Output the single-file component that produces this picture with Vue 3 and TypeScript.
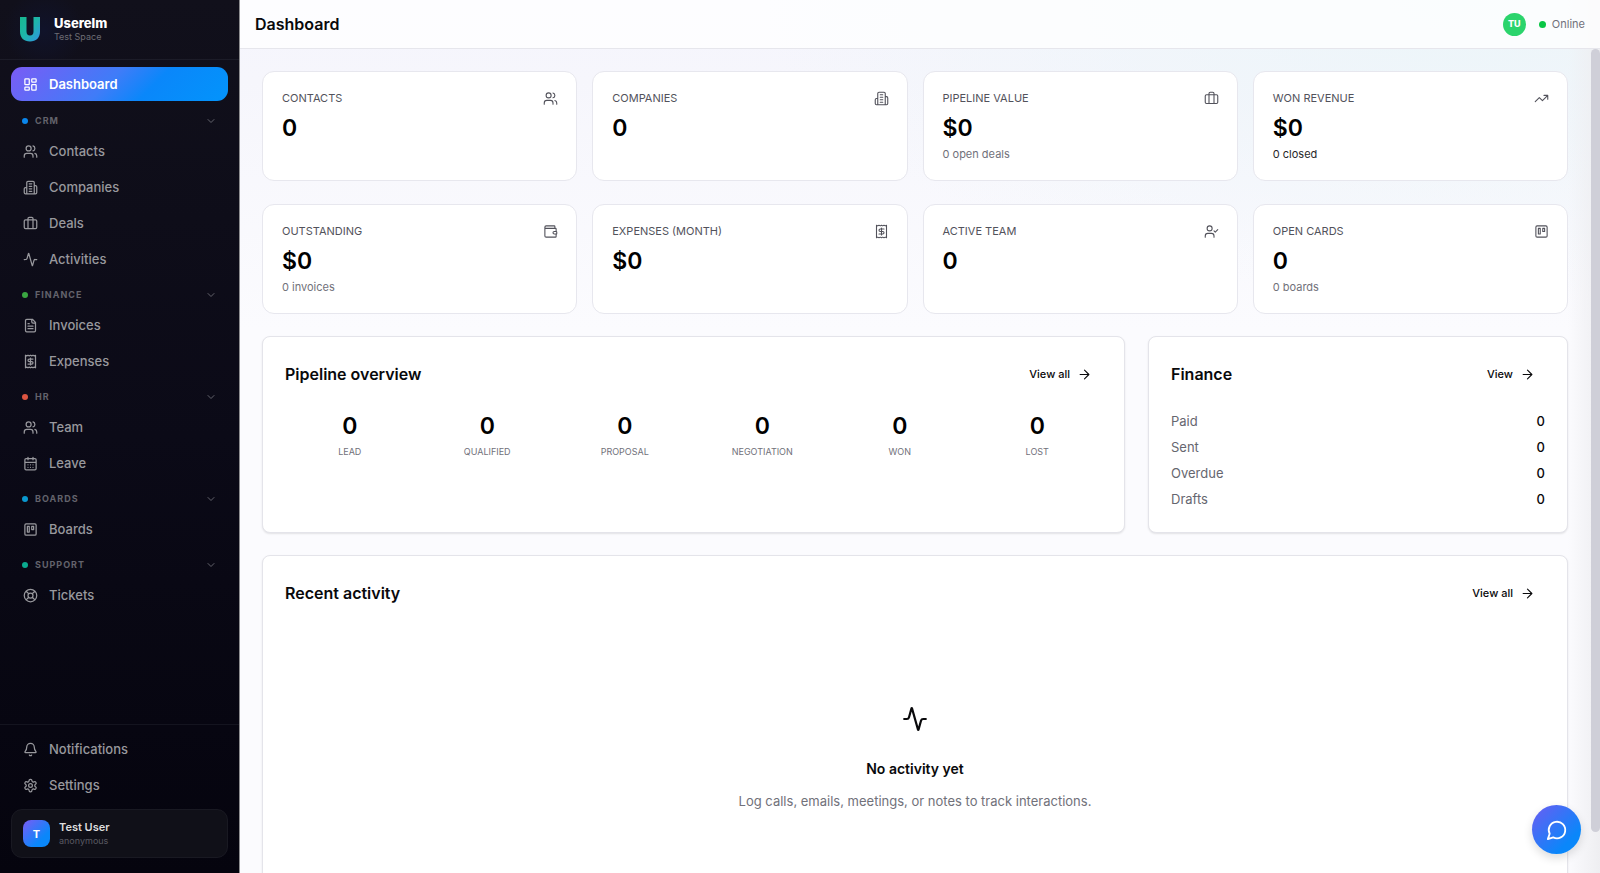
<script setup lang="ts">
import { ref } from 'vue'

type IconName =
  | 'dashboard' | 'users' | 'building' | 'briefcase' | 'activity' | 'file' | 'receipt'
  | 'calendar' | 'board' | 'lifebuoy' | 'bell' | 'settings' | 'wallet' | 'userCheck'
  | 'trending' | 'chevron' | 'arrow' | 'chat'

interface NavItem { label: string; icon: IconName }
interface NavSection { title: string; tone: string; items: NavItem[] }
interface Stat { label: string; value: string; icon: IconName; note?: string; strong?: boolean }

const icons: Record<IconName, string> = {
  dashboard: 'M4 3h5a1 1 0 0 1 1 1v7a1 1 0 0 1-1 1H4a1 1 0 0 1-1-1V4a1 1 0 0 1 1-1ZM15 3h5a1 1 0 0 1 1 1v3a1 1 0 0 1-1 1h-5a1 1 0 0 1-1-1V4a1 1 0 0 1 1-1ZM15 12h5a1 1 0 0 1 1 1v7a1 1 0 0 1-1 1h-5a1 1 0 0 1-1-1v-7a1 1 0 0 1 1-1ZM4 16h5a1 1 0 0 1 1 1v3a1 1 0 0 1-1 1H4a1 1 0 0 1-1-1v-3a1 1 0 0 1 1-1Z',
  users: 'M16 21v-2a4 4 0 0 0-4-4H6a4 4 0 0 0-4 4v2M16 3.128a4 4 0 0 1 0 7.744M22 21v-2a4 4 0 0 0-3-3.87M13 7a4 4 0 1 1-8 0a4 4 0 1 1 8 0Z',
  building: 'M6 22V4a2 2 0 0 1 2-2h8a2 2 0 0 1 2 2v18ZM6 12H4a2 2 0 0 0-2 2v6a2 2 0 0 0 2 2h2M18 9h2a2 2 0 0 1 2 2v9a2 2 0 0 1-2 2h-2M10 6h4M10 10h4M10 14h4M10 18h4',
  briefcase: 'M16 20V4a2 2 0 0 0-2-2h-4a2 2 0 0 0-2 2v16M4 6h16a2 2 0 0 1 2 2v10a2 2 0 0 1-2 2H4a2 2 0 0 1-2-2V8a2 2 0 0 1 2-2Z',
  activity: 'M22 12h-2.48a2 2 0 0 0-1.93 1.46l-2.35 8.36a.25.25 0 0 1-.48 0L9.24 2.18a.25.25 0 0 0-.48 0l-2.35 8.36A2 2 0 0 1 4.49 12H2',
  file: 'M15 2H6a2 2 0 0 0-2 2v16a2 2 0 0 0 2 2h12a2 2 0 0 0 2-2V7ZM14 2v4a2 2 0 0 0 2 2h4M10 9H8M16 13H8M16 17H8',
  receipt: 'M4 2v20l2-1 2 1 2-1 2 1 2-1 2 1 2-1 2 1V2l-2 1-2-1-2 1-2-1-2 1-2-1-2 1ZM16 8h-6a2 2 0 1 0 0 4h4a2 2 0 1 1 0 4H8M12 17.5v-11',
  calendar: 'M8 2v4M16 2v4M5 4h14a2 2 0 0 1 2 2v14a2 2 0 0 1-2 2H5a2 2 0 0 1-2-2V6a2 2 0 0 1 2-2ZM3 10h18M8 14h.01M12 14h.01M16 14h.01M8 18h.01M12 18h.01M16 18h.01',
  board: 'M5 3h14a2 2 0 0 1 2 2v14a2 2 0 0 1-2 2H5a2 2 0 0 1-2-2V5a2 2 0 0 1 2-2ZM7 7h3v9H7ZM14 7h3v5h-3Z',
  lifebuoy: 'M22 12a10 10 0 1 1-20 0a10 10 0 1 1 20 0ZM16 12a4 4 0 1 1-8 0a4 4 0 1 1 8 0ZM4.93 4.93l4.24 4.24M14.83 9.17l4.24-4.24M14.83 14.83l4.24 4.24M9.17 14.83l-4.24 4.24',
  bell: 'M10.268 21a2 2 0 0 0 3.464 0M3.262 15.326A1 1 0 0 0 4 17h16a1 1 0 0 0 .74-1.673C19.41 13.956 18 12.499 18 8A6 6 0 0 0 6 8c0 4.499-1.411 5.956-2.738 7.326',
  settings: 'M12.22 2h-.44a2 2 0 0 0-2 2v.18a2 2 0 0 1-1 1.73l-.43.25a2 2 0 0 1-2 0l-.15-.08a2 2 0 0 0-2.73.73l-.22.38a2 2 0 0 0 .73 2.73l.15.1a2 2 0 0 1 1 1.72v.51a2 2 0 0 1-1 1.74l-.15.09a2 2 0 0 0-.73 2.73l.22.38a2 2 0 0 0 2.73.73l.15-.08a2 2 0 0 1 2 0l.43.25a2 2 0 0 1 1 1.73V20a2 2 0 0 0 2 2h.44a2 2 0 0 0 2-2v-.18a2 2 0 0 1 1-1.73l.43-.25a2 2 0 0 1 2 0l.15.08a2 2 0 0 0 2.73-.73l.22-.39a2 2 0 0 0-.73-2.73l-.15-.08a2 2 0 0 1-1-1.74v-.5a2 2 0 0 1 1-1.74l.15-.09a2 2 0 0 0 .73-2.73l-.22-.38a2 2 0 0 0-2.73-.73l-.15.08a2 2 0 0 1-2 0l-.43-.25a2 2 0 0 1-1-1.73V4a2 2 0 0 0-2-2ZM15 12a3 3 0 1 1-6 0a3 3 0 1 1 6 0Z',
  wallet: 'M19 7V4a1 1 0 0 0-1-1H5a2 2 0 0 0 0 4h15a1 1 0 0 1 1 1v4h-3a2 2 0 0 0 0 4h3a1 1 0 0 0 1-1v-2a1 1 0 0 0-1-1M3 5v14a2 2 0 0 0 2 2h15a1 1 0 0 0 1-1v-4',
  userCheck: 'M16 11l2 2 4-4M16 21v-2a4 4 0 0 0-4-4H6a4 4 0 0 0-4 4v2M13 7a4 4 0 1 1-8 0a4 4 0 1 1 8 0Z',
  trending: 'M16 7h6v6M22 7l-8.5 8.5-5-5L2 17',
  chevron: 'M6 9l6 6 6-6',
  arrow: 'M5 12h14M12 5l7 7-7 7',
  chat: 'M7.9 20A9 9 0 1 0 4 16.1L2 22Z',
}

const sections: NavSection[] = [
  {
    title: 'CRM', tone: 'blue',
    items: [
      { label: 'Contacts', icon: 'users' },
      { label: 'Companies', icon: 'building' },
      { label: 'Deals', icon: 'briefcase' },
      { label: 'Activities', icon: 'activity' },
    ],
  },
  {
    title: 'FINANCE', tone: 'green',
    items: [
      { label: 'Invoices', icon: 'file' },
      { label: 'Expenses', icon: 'receipt' },
    ],
  },
  {
    title: 'HR', tone: 'red',
    items: [
      { label: 'Team', icon: 'users' },
      { label: 'Leave', icon: 'calendar' },
    ],
  },
  { title: 'BOARDS', tone: 'cyan', items: [{ label: 'Boards', icon: 'board' }] },
  { title: 'SUPPORT', tone: 'teal', items: [{ label: 'Tickets', icon: 'lifebuoy' }] },
]

const footerItems: NavItem[] = [
  { label: 'Notifications', icon: 'bell' },
  { label: 'Settings', icon: 'settings' },
]

const stats: Stat[] = [
  { label: 'CONTACTS', value: '0', icon: 'users' },
  { label: 'COMPANIES', value: '0', icon: 'building' },
  { label: 'PIPELINE VALUE', value: '$0', icon: 'briefcase', note: '0 open deals' },
  { label: 'WON REVENUE', value: '$0', icon: 'trending', note: '0 closed', strong: true },
  { label: 'OUTSTANDING', value: '$0', icon: 'wallet', note: '0 invoices' },
  { label: 'EXPENSES (MONTH)', value: '$0', icon: 'receipt' },
  { label: 'ACTIVE TEAM', value: '0', icon: 'userCheck' },
  { label: 'OPEN CARDS', value: '0', icon: 'board', note: '0 boards' },
]

const stages = ['LEAD', 'QUALIFIED', 'PROPOSAL', 'NEGOTIATION', 'WON', 'LOST']
const finance = ['Paid', 'Sent', 'Overdue', 'Drafts']

const collapsed = ref<Record<string, boolean>>({})
function toggle(title: string): void {
  collapsed.value[title] = !collapsed.value[title]
}
</script>

<template>
  <div class="app">
    <aside class="sidebar">
      <div class="brand">
        <svg class="logo" viewBox="0 0 20 25" aria-hidden="true">
          <defs>
            <linearGradient id="logo-fill" x1="0" y1="0" x2="1" y2="1">
              <stop offset="0" stop-color="#17b890" />
              <stop offset="0.5" stop-color="#1eb5ab" />
              <stop offset="1" stop-color="#3192e6" />
            </linearGradient>
          </defs>
          <path fill="url(#logo-fill)" d="M0 0H6.500V14.500Q6.500 18.500 10 18.500T13.500 14.500V0H20V14.500C20 21 16 24.500 10 24.500S0 21 0 14.500Z" />
        </svg>
        <div class="brand-text">
          <strong>Userelm</strong>
          <span>Test Space</span>
        </div>
      </div>

      <nav class="nav" aria-label="Main">
        <a class="item active" href="#dashboard" aria-current="page">
          <svg class="icon" viewBox="0 0 24 24" aria-hidden="true"><path :d="icons.dashboard" /></svg>
          Dashboard
        </a>
        <section v-for="s in sections" :key="s.title" class="group">
          <button
            class="group-head"
            type="button"
            :aria-expanded="!collapsed[s.title]"
            @click="toggle(s.title)"
          >
            <span class="dot" :class="s.tone"></span>
            <span class="group-title">{{ s.title }}</span>
            <svg class="icon chevron" viewBox="0 0 24 24" aria-hidden="true"><path :d="icons.chevron" /></svg>
          </button>
          <div v-if="!collapsed[s.title]" class="group-items">
            <a v-for="i in s.items" :key="i.label" class="item" :href="'#' + i.label.toLowerCase()">
              <svg class="icon" viewBox="0 0 24 24" aria-hidden="true"><path :d="icons[i.icon]" /></svg>
              {{ i.label }}
            </a>
          </div>
        </section>
      </nav>

      <div class="side-foot">
        <a v-for="i in footerItems" :key="i.label" class="item" :href="'#' + i.label.toLowerCase()">
          <svg class="icon" viewBox="0 0 24 24" aria-hidden="true"><path :d="icons[i.icon]" /></svg>
          {{ i.label }}
        </a>
        <button class="profile" type="button">
          <span class="profile-badge">T</span>
          <span class="profile-text">
            <span class="profile-name">Test User</span>
            <span class="profile-role">anonymous</span>
          </span>
        </button>
      </div>
    </aside>

    <div class="main">
      <header class="topbar">
        <h1>Dashboard</h1>
        <div class="presence">
          <span class="avatar">TU</span>
          <span class="status"><span class="status-dot"></span>Online</span>
        </div>
      </header>

      <main class="content">
        <section class="stats" aria-label="Key figures">
          <article v-for="s in stats" :key="s.label" class="stat">
            <div class="stat-head">
              <span>{{ s.label }}</span>
              <svg class="icon" viewBox="0 0 24 24" aria-hidden="true"><path :d="icons[s.icon]" /></svg>
            </div>
            <div class="figure">{{ s.value }}</div>
            <div v-if="s.note" class="note" :class="{ strong: s.strong }">{{ s.note }}</div>
          </article>
        </section>

        <div class="panels">
          <section class="panel wide">
            <div class="panel-head">
              <h2>Pipeline overview</h2>
              <a class="more" href="#deals">View all
                <svg class="icon" viewBox="0 0 24 24" aria-hidden="true"><path :d="icons.arrow" /></svg>
              </a>
            </div>
            <div class="stages">
              <div v-for="s in stages" :key="s" class="stage">
                <div class="figure">0</div>
                <div class="stage-name">{{ s }}</div>
              </div>
            </div>
          </section>

          <section class="panel">
            <div class="panel-head">
              <h2>Finance</h2>
              <a class="more" href="#invoices">View
                <svg class="icon" viewBox="0 0 24 24" aria-hidden="true"><path :d="icons.arrow" /></svg>
              </a>
            </div>
            <dl class="ledger">
              <div v-for="f in finance" :key="f">
                <dt>{{ f }}</dt>
                <dd>0</dd>
              </div>
            </dl>
          </section>
        </div>

        <section class="panel">
          <div class="panel-head">
            <h2>Recent activity</h2>
            <a class="more" href="#activities">View all
              <svg class="icon" viewBox="0 0 24 24" aria-hidden="true"><path :d="icons.arrow" /></svg>
            </a>
          </div>
          <div class="empty">
            <svg class="icon" viewBox="0 0 24 24" aria-hidden="true"><path :d="icons.activity" /></svg>
            <h3>No activity yet</h3>
            <p>Log calls, emails, meetings, or notes to track interactions.</p>
          </div>
        </section>
      </main>

      <div class="scroll-thumb" aria-hidden="true"></div>
    </div>

    <button class="fab" type="button" aria-label="Open chat">
      <svg class="icon" viewBox="0 0 24 24" aria-hidden="true"><path :d="icons.chat" /></svg>
    </button>
  </div>
</template>

<style>
body {
  margin: 0;
  overflow: hidden;
}
</style>

<style scoped>
.app {
  display: flex;
  height: 100vh;
  font-family: Inter, 'Liberation Sans', sans-serif;
  font-size: 13px;
  line-height: 20px;
  color: #09090b;
}
.app * {
  box-sizing: border-box;
}
button {
  font: inherit;
  border: 0;
  margin: 0;
  cursor: pointer;
}
a {
  color: inherit;
  text-decoration: none;
}
h1, h2, h3, p, dl, dd {
  margin: 0;
}
.icon {
  width: 15px;
  height: 15px;
  flex: none;
  fill: none;
  stroke: currentColor;
  stroke-width: 2;
  stroke-linecap: round;
  stroke-linejoin: round;
}

/* Sidebar */
.sidebar {
  flex: none;
  display: flex;
  flex-direction: column;
  width: 240px;
  border-right: 1px solid #8d8d90;
  background: linear-gradient(180deg, #11101b 0%, #0b0a17 50%, #05040e 100%);
  color: #98989d;
}
.brand {
  display: flex;
  align-items: center;
  gap: 14px;
  height: 60px;
  padding: 0 20px;
  border-bottom: 1px solid #1c1c28;
  background: radial-gradient(circle at 44px 30px, #10132a 0, transparent 40px);
}
.logo {
  width: 20px;
  height: 25px;
}
.brand-text {
  display: flex;
  flex-direction: column;
  font-size: 9px;
  line-height: 14px;
  color: #6c6c74;
}
.brand-text strong {
  font-size: 13px;
  font-weight: 800;
  color: #ffffff;
}
.nav {
  flex: 1;
  min-height: 0;
  padding: 7px 11px;
  overflow: hidden;
}
.item {
  display: flex;
  align-items: center;
  gap: 11px;
  height: 34px;
  padding: 0 12px;
  border-radius: 11px;
  font-weight: 500;
}
.item.active {
  background: linear-gradient(135deg, #7a5cf5 0%, #3f7cf8 45%, #0a87fa 64%, #0394fb 100%);
  color: #ffffff;
  font-weight: 600;
}
.group {
  margin-top: 6px;
}
.group-head {
  display: flex;
  align-items: center;
  gap: 7px;
  width: 100%;
  height: 27px;
  padding: 0 11px;
  background: none;
  color: #63636c;
  font-size: 9px;
  font-weight: 700;
  letter-spacing: 1px;
}
.group + .group {
  margin-top: 5px;
}
.group-title {
  flex: 1;
  text-align: left;
}
.chevron {
  width: 12px;
  height: 12px;
}
.dot {
  width: 6px;
  height: 6px;
  border-radius: 50%;
}
.blue { background: #0a86ec; }
.green { background: #3aa641; }
.red { background: #dc5441; }
.cyan { background: #0a98cf; }
.teal { background: #0aab8f; }
.group-items {
  display: grid;
  gap: 2px;
}
.side-foot {
  display: grid;
  gap: 2px;
  padding: 7px 11px 15px;
  border-top: 1px solid #14141f;
}
.profile {
  display: flex;
  align-items: center;
  gap: 9px;
  height: 49px;
  margin-top: 5px;
  padding: 0 11px;
  border: 1px solid #191922;
  border-radius: 11px;
  background: #101018;
  text-align: left;
}
.profile-badge {
  display: grid;
  place-items: center;
  width: 27px;
  height: 27px;
  border-radius: 8px;
  background: linear-gradient(135deg, #7a5cf5 0%, #0a87fa 70%);
  color: #ffffff;
  font-size: 11px;
  font-weight: 700;
}
.profile-text {
  display: flex;
  flex-direction: column;
  line-height: 14px;
}
.profile-name {
  font-size: 11px;
  font-weight: 600;
  color: #dededf;
}
.profile-role {
  font-size: 9px;
  color: #5a5a62;
}

/* Main column */
.main {
  position: relative;
  flex: 1;
  min-width: 0;
  display: flex;
  flex-direction: column;
  background:
    linear-gradient(270deg, #eeeef1 0, transparent 32px),
    radial-gradient(ellipse 700px 300px at 90% 0, #ecf5f9 0, transparent 100%),
    linear-gradient(180deg, #f5f5fd 0, #f6f6fc 80px, #fbfbfe 330px);
}
.topbar {
  flex: none;
  display: flex;
  align-items: center;
  justify-content: space-between;
  height: 49px;
  padding: 0 15px;
  border-bottom: 1px solid #e6e6ec;
  background: rgba(255, 255, 255, 0.75);
}
h1 {
  font-size: 16px;
  font-weight: 600;
}
.presence {
  display: flex;
  align-items: center;
  gap: 13px;
}
.avatar {
  display: grid;
  place-items: center;
  width: 23px;
  height: 23px;
  border-radius: 50%;
  background: #2bd46c;
  color: #ffffff;
  font-size: 9px;
  font-weight: 800;
}
.status {
  display: flex;
  align-items: center;
  gap: 6px;
  font-size: 11px;
  color: #71717a;
}
.status-dot {
  width: 7px;
  height: 7px;
  border-radius: 50%;
  background: #09c645;
}
.content {
  flex: 1;
  min-height: 0;
  display: flex;
  flex-direction: column;
  gap: 22px;
  padding: 22px 32px 22px 22px;
  overflow-y: auto;
  scrollbar-width: none;
}
.content > * {
  flex: none;
}
.scroll-thumb {
  position: absolute;
  top: 49px;
  right: 0;
  bottom: 41px;
  width: 9px;
  border-radius: 5px;
  background: #cfcfd8;
}
.stats {
  display: grid;
  grid-template-columns: repeat(4, 1fr);
  gap: 23px 15px;
}
.stat {
  padding: 18px 18px 18px 19px;
  border: 1px solid #e7e7ee;
  border-radius: 12px;
  background: #ffffff;
}
.stat-head {
  display: flex;
  align-items: center;
  justify-content: space-between;
  font-size: 11px;
  line-height: 16px;
  color: #52525b;
}
.stat-head .icon {
  stroke-width: 1.75;
}
.figure {
  font-size: 23px;
  line-height: 30px;
  font-weight: 600;
  color: #000000;
}
.stat .figure {
  margin-top: 7px;
}
.note {
  margin-top: 3px;
  font-size: 11px;
  line-height: 16px;
  color: #71717a;
}
.note.strong {
  color: #27272a;
}
.panels {
  display: grid;
  grid-template-columns: repeat(3, 1fr);
  gap: 23px;
}
.panel {
  padding: 22px 22px 23px;
  border: 1px solid #e4e4ea;
  border-radius: 8px;
  background: #ffffff;
  box-shadow: 0 1px 2px rgba(0, 0, 0, 0.1);
}
.wide {
  grid-column: span 2;
}
.panel-head {
  display: flex;
  align-items: center;
  justify-content: space-between;
  height: 30px;
  margin-bottom: 22px;
}
h2 {
  font-size: 16px;
  font-weight: 600;
}
.more {
  display: flex;
  align-items: center;
  gap: 7px;
  height: 30px;
  padding: 0 10px;
  border-radius: 6px;
  font-size: 11px;
  font-weight: 500;
}
.more .icon {
  stroke-width: 1.75;
}
.stages {
  display: grid;
  grid-template-columns: repeat(6, 1fr);
  gap: 8px;
  text-align: center;
}
.stage-name {
  margin-top: 3px;
  font-size: 9px;
  line-height: 15px;
  color: #71717a;
}
.ledger {
  display: grid;
  gap: 6px;
}
.ledger div {
  display: flex;
  justify-content: space-between;
}
.ledger dt {
  color: #66666f;
}
.ledger dd {
  font-weight: 500;
}
.empty {
  display: flex;
  flex-direction: column;
  align-items: center;
  padding: 76px 0;
  text-align: center;
}
.empty .icon {
  width: 26px;
  height: 26px;
}
h3 {
  margin-top: 26px;
  font-size: 14px;
  line-height: 22px;
  font-weight: 600;
}
.empty p {
  margin-top: 11px;
  color: #71717a;
}
.fab {
  position: fixed;
  right: 19px;
  bottom: 19px;
  display: grid;
  place-items: center;
  width: 49px;
  height: 49px;
  padding: 0;
  border-radius: 50%;
  background: linear-gradient(135deg, #6c5cf2 0%, #0a87fa 75%);
  color: #ffffff;
  box-shadow: 0 4px 10px rgba(0, 0, 0, 0.14);
}
.fab .icon {
  width: 22px;
  height: 22px;
}
</style>
